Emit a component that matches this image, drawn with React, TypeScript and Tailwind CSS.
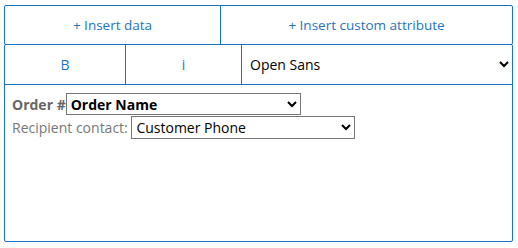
import React from "react";

export default function App() {
  return (
    <div className="w-[518px] h-[248px] bg-white pt-[5px] pl-[4px] font-['Open_Sans',sans-serif]">
      <div className="w-[509px]">
        <div className="flex h-[40px] border border-[#1873c2] rounded-[2px] text-[13.5px] text-[#1f74bd]">
          <button className="w-[216px] border-r border-[#1873c2] flex items-center justify-center">+ Insert data</button>
          <button className="flex-1 flex items-center justify-center">+ Insert custom attribute</button>
        </div>
        <div className="h-[198px] border border-[#1873c2] rounded-[2px] -mt-px">
          <div className="flex h-[40px] border-b border-[#1873c2] text-[14px]">
            <button className="w-[121px] border-r border-[#1873c2] text-[#1f74bd] flex items-center justify-center">B</button>
            <button className="w-[116px] border-r border-[#1873c2] text-[#1f74bd] flex items-center justify-center">i</button>
            <select className="flex-1 h-full pl-[4px] pr-[3px] text-black outline-none">
              <option>Open Sans</option>
            </select>
          </div>
          <div className="pl-[7px] pt-[8px] text-[14px] leading-[23px]">
            <div>
              <span className="font-bold text-[#666]">Order #</span>
              <select className="w-[235px] h-[22px] border border-[#767676] font-bold text-black align-top text-[14px]">
                <option>Order Name</option>
              </select>
            </div>
            <div>
              <span className="text-[#777]">Recipient contact: </span>
              <select className="w-[224px] h-[23px] border border-[#767676] text-black align-top text-[14px]">
                <option>Customer Phone</option>
              </select>
            </div>
          </div>
        </div>
      </div>
    </div>
  );
}
